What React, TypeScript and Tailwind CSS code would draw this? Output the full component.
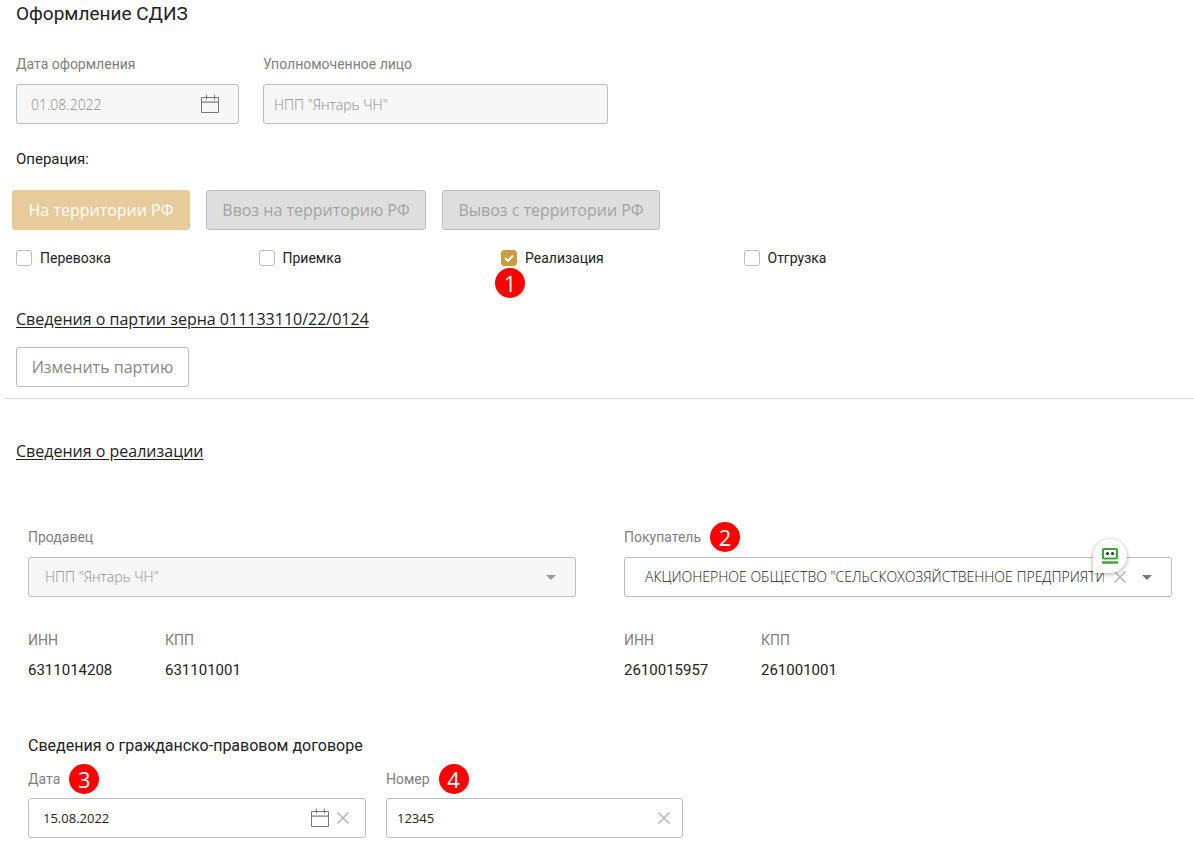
import type { ReactNode } from "react";

const FONT_UI = "font-['Open_Sans','Noto_Sans',sans-serif]";

const inputBase =
  "h-10 w-full rounded-[3px] border border-[#bdbdbd] font-['Open_Sans','Noto_Sans',sans-serif] text-[#222] outline-none disabled:bg-[#f7f7f7] disabled:text-[#8c8c8c] disabled:opacity-100";

function CalendarIcon() {
  return (
    <svg width="20" height="20" viewBox="0 0 20 20" fill="none" stroke="#777" aria-hidden="true">
      <path d="M1.5 3.5h17v15h-17zM1.5 8h17M6.5 0.5v5M14.5 0.5v5" />
      <path d="M1.5 8.5h17" strokeOpacity="0.4" />
    </svg>
  );
}

function CrossIcon() {
  return (
    <svg width="14" height="14" viewBox="0 0 14 14" fill="none" stroke="#b5b5b5" strokeWidth="1.5" aria-hidden="true">
      <path d="M1.5 1.5l11 11M12.5 1.5l-11 11" />
    </svg>
  );
}

function CaretIcon({ color }: { color: string }) {
  return (
    <svg width="10" height="5" viewBox="0 0 10 5" fill={color} aria-hidden="true">
      <path d="M0 0h10L5 5z" />
    </svg>
  );
}

function RobotIcon() {
  return (
    <svg width="18" height="18" viewBox="0 0 18 18" fill="none" aria-hidden="true">
      <rect x="2" y="2" width="14" height="9.5" rx="1" stroke="#3fa535" strokeWidth="2.2" />
      <circle cx="6.5" cy="6.5" r="1.6" fill="#333" />
      <circle cx="11.5" cy="6.5" r="1.6" fill="#333" />
      <path d="M2 15.5h14" stroke="#3fa535" strokeWidth="2.6" strokeLinecap="round" />
    </svg>
  );
}

function Marker({ children }: { children: ReactNode }) {
  return (
    <span
      className={`${FONT_UI} -my-2 flex size-[30px] shrink-0 items-center justify-center rounded-full bg-[#fe0000] text-[22px] leading-none text-white`}
    >
      {children}
    </span>
  );
}

function FieldLabel({ id, text, marker }: { id: string; text: string; marker?: string }) {
  return (
    <div className="flex h-5 items-center gap-[9px]">
      <label htmlFor={id} className="text-sm text-[#808080]">
        {text}
      </label>
      {marker && <Marker>{marker}</Marker>}
    </div>
  );
}

function Requisites({ inn, kpp }: { inn: string; kpp: string }) {
  return (
    <dl className="mt-[33px] flex">
      <div className="w-[137px]">
        <dt className="text-sm leading-5 text-[#808080]">ИНН</dt>
        <dd className="mt-2 text-[15px] leading-6 text-[#222]">{inn}</dd>
      </div>
      <div>
        <dt className="text-sm leading-5 text-[#808080]">КПП</dt>
        <dd className="mt-2 text-[15px] leading-6 text-[#222]">{kpp}</dd>
      </div>
    </dl>
  );
}

const operations = [
  { id: "transport", label: "Перевозка" },
  { id: "acceptance", label: "Приемка" },
  { id: "sale", label: "Реализация", checked: true, marker: "1" },
  { id: "shipment", label: "Отгрузка" },
];

export default function App() {
  return (
    <main className="min-h-screen bg-white pb-3 font-[Roboto,sans-serif] text-[#222]">
      <section className="px-4">
        <h1 className="text-[19px] leading-7">Оформление СДИЗ</h1>

        <div className="mt-[26px] flex gap-6">
          <div className="w-[223px]">
            <FieldLabel id="issue-date" text="Дата оформления" />
            <div className="relative mt-2.5">
              <input id="issue-date" className={`${inputBase} px-3.5 text-sm font-light`} defaultValue="01.08.2022" disabled />
              <span className="absolute inset-y-0 right-[19px] flex items-center">
                <CalendarIcon />
              </span>
            </div>
          </div>
          <div className="w-[345px]">
            <FieldLabel id="person" text="Уполномоченное лицо" />
            <div className="mt-2.5">
              <input id="person" className={`${inputBase} px-2.5 text-sm font-light`} defaultValue={'НПП "Янтарь ЧН"'} disabled />
            </div>
          </div>
        </div>

        <p className="mt-[23px] text-[15px] leading-6">Операция:</p>

        <div className={`${FONT_UI} -ml-1 mt-[19px] flex gap-4 text-base`}>
          <button type="button" className="h-10 w-[178px] rounded-[3px] bg-[#e7cb9b] font-medium text-white">
            На территории РФ
          </button>
          <button type="button" disabled className="h-10 w-[220px] rounded-[3px] border border-[#bdbdbd] bg-[#dedede] text-[#a3a3a3]">
            Ввоз на территорию РФ
          </button>
          <button type="button" disabled className="h-10 w-[218px] rounded-[3px] border border-[#bdbdbd] bg-[#dedede] text-[#a3a3a3]">
            Вывоз с территории РФ
          </button>
        </div>

        <div className="mt-[18px] grid max-w-[970px] grid-cols-4">
          {operations.map((op) => (
            <div key={op.id} className="relative">
              <label className="flex h-5 items-center gap-2 text-sm">
                <span className="relative flex size-4">
                  <input
                    type="checkbox"
                    defaultChecked={op.checked}
                    className="peer size-4 appearance-none rounded-[3px] border border-[#bdbdbd] bg-white checked:border-[#cf9b40] checked:bg-[#cf9b40]"
                  />
                  <svg
                    className="pointer-events-none absolute inset-0 hidden peer-checked:block"
                    viewBox="0 0 16 16"
                    fill="none"
                    stroke="#fff"
                    strokeWidth="2"
                    aria-hidden="true"
                  >
                    <path d="M4 8l3 3 5-5.5" />
                  </svg>
                </span>
                {op.label}
              </label>
              {op.marker && (
                <span className="absolute -left-1.5 top-7">
                  <Marker>{op.marker}</Marker>
                </span>
              )}
            </div>
          ))}
        </div>

        <h2 className="mt-[39px] leading-6">
          <a href="#batch" className={`${FONT_UI} text-base underline underline-offset-2`}>
            Сведения о партии зерна 011133110/22/0124
          </a>
        </h2>
        <button type="button" className={`${FONT_UI} mt-[15px] block h-10 w-[173px] rounded-[3px] border border-[#bdbdbd] text-base text-[#888]`}>
          Изменить партию
        </button>
      </section>

      <hr className="ml-1 mt-[11px] border-[#dedede]" />

      <section>
        <h2 className="ml-4 mt-10 leading-6">
          <a href="#sale" className={`${FONT_UI} text-base underline underline-offset-2`}>
            Сведения о реализации
          </a>
        </h2>

        <div className="mt-[63px] grid grid-cols-2 gap-12 pl-7 pr-[22px]">
          <div>
            <FieldLabel id="seller" text="Продавец" />
            <div className="relative mt-2.5">
              <select id="seller" disabled className={`${inputBase} appearance-none px-4 text-sm font-light`}>
                <option>НПП "Янтарь ЧН"</option>
              </select>
              <span className="pointer-events-none absolute inset-y-0 right-5 flex items-center">
                <CaretIcon color="#999" />
              </span>
            </div>
            <Requisites inn="6311014208" kpp="631101001" />
          </div>

          <div>
            <FieldLabel id="buyer" text="Покупатель" marker="2" />
            <div className="relative mt-2.5">
              <select id="buyer" className={`${inputBase} appearance-none pl-5 pr-[67px] text-sm font-light`}>
                <option>АКЦИОНЕРНОЕ ОБЩЕСТВО "СЕЛЬСКОХОЗЯЙСТВЕННОЕ ПРЕДПРИЯТИЕ"</option>
              </select>
              <button type="button" aria-label="Очистить" className="absolute inset-y-0 right-[45px] flex items-center">
                <CrossIcon />
              </button>
              <span className="pointer-events-none absolute inset-y-0 right-5 flex items-center">
                <CaretIcon color="#777" />
              </span>
              <span className="absolute -top-[18px] right-[45px] flex size-[34px] items-center justify-center rounded-full rounded-bl-none bg-white shadow-[0_1px_4px_rgba(0,0,0,0.35)]">
                <RobotIcon />
              </span>
            </div>
            <Requisites inn="2610015957" kpp="261001001" />
          </div>
        </div>

        <div className="mt-[52px] px-7">
          <h3 className="text-base leading-6">Сведения о гражданско-правовом договоре</h3>
          <div className="mt-[11px] flex gap-5">
            <div className="w-[338px]">
              <FieldLabel id="contract-date" text="Дата" marker="3" />
              <div className="relative mt-[9px]">
                <input id="contract-date" className={`${inputBase} pl-3.5 pr-16 text-[13px]`} defaultValue="15.08.2022" />
                <span className="absolute inset-y-0 right-4 flex items-center gap-1.5">
                  <CalendarIcon />
                  <button type="button" aria-label="Очистить">
                    <CrossIcon />
                  </button>
                </span>
              </div>
            </div>
            <div className="w-[297px]">
              <FieldLabel id="contract-number" text="Номер" marker="4" />
              <div className="relative mt-[9px]">
                <input id="contract-number" className={`${inputBase} pl-2.5 pr-10 text-[13px]`} defaultValue="12345" />
                <button type="button" aria-label="Очистить" className="absolute inset-y-0 right-3 flex items-center">
                  <CrossIcon />
                </button>
              </div>
            </div>
          </div>
        </div>
      </section>
    </main>
  );
}
